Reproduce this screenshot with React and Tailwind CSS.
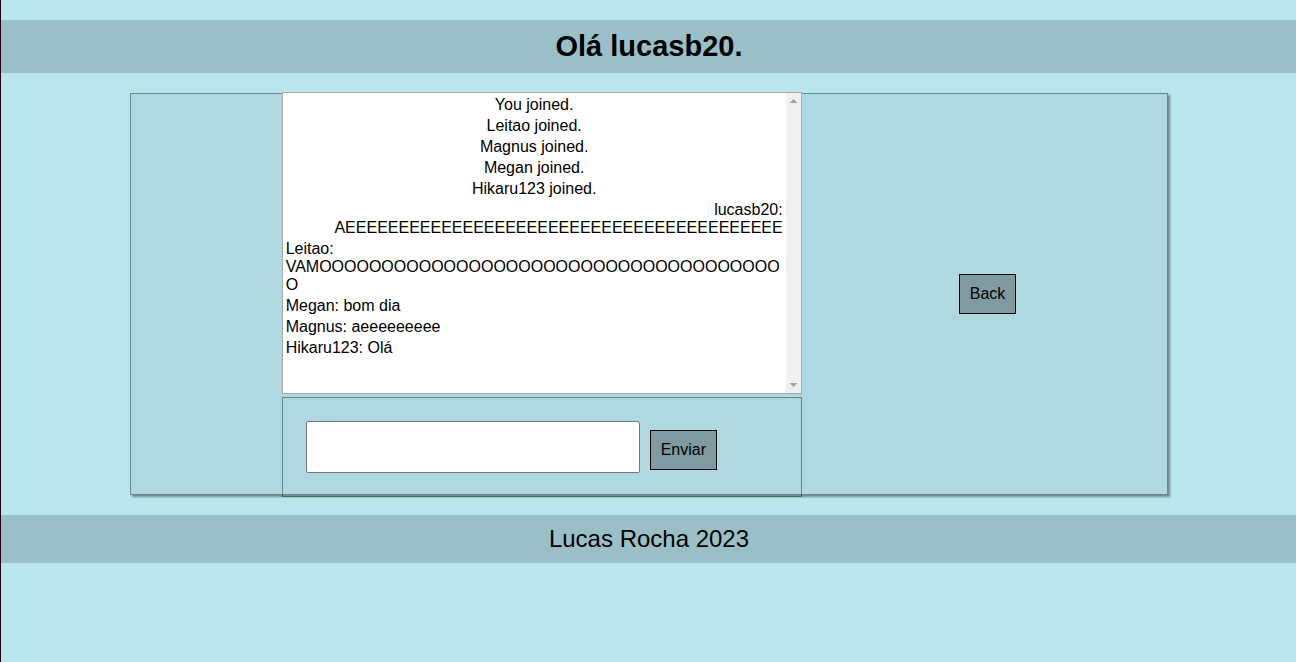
const messages = [
  { kind: "system", text: "You joined." },
  { kind: "system", text: "Leitao joined." },
  { kind: "system", text: "Magnus joined." },
  { kind: "system", text: "Megan joined." },
  { kind: "system", text: "Hikaru123 joined." },
  { kind: "own", text: "lucasb20: A" + "E".repeat(41) },
  { kind: "other", text: "Leitao: VAM" + "O".repeat(38) },
  { kind: "other", text: "Megan: bom dia" },
  { kind: "other", text: "Magnus: aeeeeeeeee" },
  { kind: "other", text: "Hikaru123: Olá" },
];

const alignment = {
  system: "text-center",
  own: "text-right",
  other: "text-left",
};

function ScrollTrack() {
  return (
    <div aria-hidden="true" className="flex w-[15px] shrink-0 flex-col items-center justify-between bg-[#f0f0f0] py-1.5">
      <svg width="7" height="4" viewBox="0 0 7 4" fill="#a3a3a3" shapeRendering="crispEdges">
        <path d="M3 0h1v1h1v1h1v1h1v1H0V3h1V2h1V1h1z" />
      </svg>
      <svg width="7" height="4" viewBox="0 0 7 4" fill="#a3a3a3" shapeRendering="crispEdges">
        <path d="M0 0h7v1H6v1H5v1H4v1H3V3H2V2H1V1H0z" />
      </svg>
    </div>
  );
}

function MessageList() {
  return (
    <div className="flex h-[302px] border border-[#a9a9a9] bg-white">
      <ul className="flex min-w-0 grow flex-col gap-[3px] overflow-hidden p-[3px]">
        {messages.map((message) => (
          <li key={message.text} className={`break-words ${alignment[message.kind]}`}>
            {message.text}
          </li>
        ))}
      </ul>
      <ScrollTrack />
    </div>
  );
}

function MessageForm() {
  return (
    <form
      onSubmit={(event) => event.preventDefault()}
      className="flex h-[100px] items-center gap-2.5 border border-black/40 px-[23px]"
    >
      <input
        type="text"
        aria-label="Mensagem"
        className="h-[52px] w-[334px] rounded-[2px] border border-[#767676] bg-white px-2"
      />
      <button type="submit" className="mt-1.5 border border-black bg-[#7f9ba1] p-2.5">
        Enviar
      </button>
    </form>
  );
}

export default function App() {
  return (
    <div className="min-h-screen overflow-x-hidden border-l border-[#23000f] bg-[#b9e6eb] font-['Liberation_Sans',Arial,sans-serif] text-base leading-[18px] text-black">
      <div className="flex w-screen flex-col gap-5 pt-5">
        <header className="bg-[#9bbfc7] p-2.5 text-center">
          <h1 className="text-[29px] leading-[33px] font-bold">Olá lucasb20.</h1>
        </header>
        <main className="mx-auto box-content flex h-[400px] w-4/5 items-center justify-evenly gap-1.5 border border-[#6b868c] bg-[#afd9e0] shadow-[2px_2px_2px_rgba(0,0,0,0.4)]">
          <section className="flex w-[520px] flex-col gap-[3px]">
            <MessageList />
            <MessageForm />
          </section>
          <a href="#" className="border border-black bg-[#7f9ba1] p-2.5">
            Back
          </a>
        </main>
        <footer className="bg-[#9bbfc7] p-2.5 text-center text-2xl leading-[28px]">Lucas Rocha 2023</footer>
      </div>
    </div>
  );
}
